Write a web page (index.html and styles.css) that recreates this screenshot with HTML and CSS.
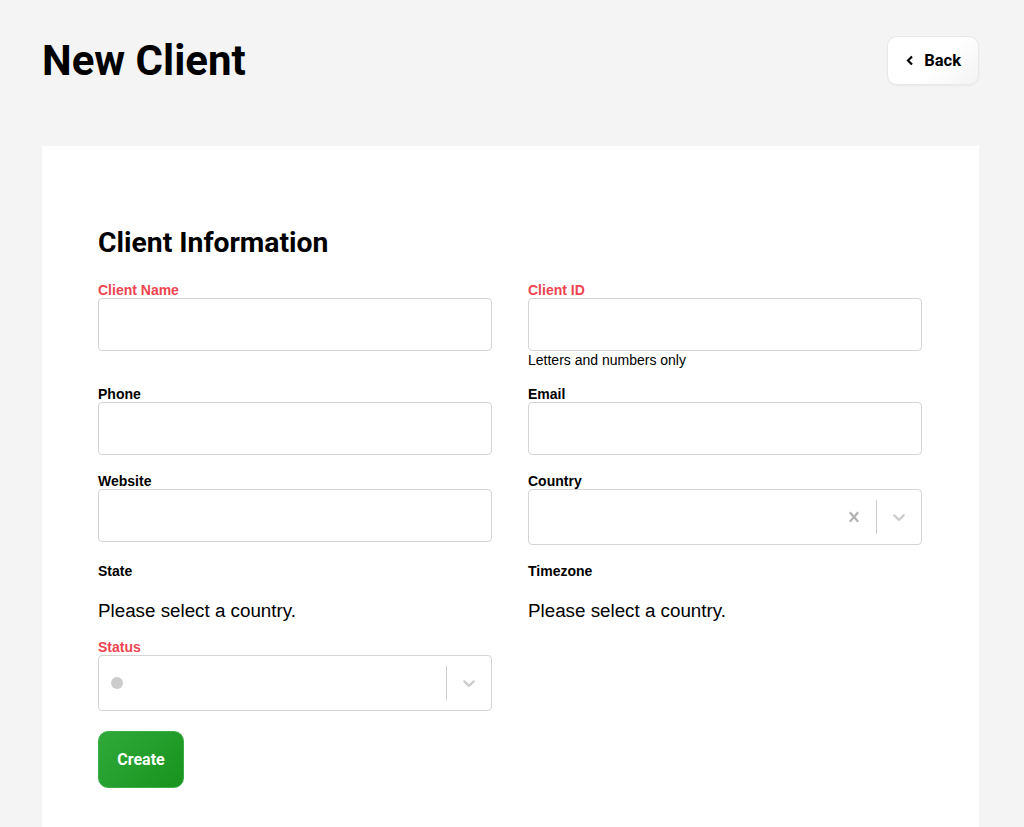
FILE: index.html
```html
<!DOCTYPE html>
<html lang="en">
<head>
  <meta charset="UTF-8">
  <title>New Client</title>
  <link rel="stylesheet" href="styles.css">
</head>
<body>
  <div id="page">
    <!-- Page header -->
    <div id="header">
      <h1>New Client</h1>
      <button class="back">
        <svg width="8" height="11" viewBox="0 0 8 11"><polyline points="6,1.5 2,5.5 6,9.5" fill="none" stroke="#000" stroke-width="2.2"/></svg>
        Back
      </button>
    </div>

    <!-- Form card -->
    <div id="card">
      <h2>Client Information</h2>
      <div class="grid">
        <div class="field">
          <label class="required">Client Name</label>
          <input type="text">
        </div>
        <div class="field">
          <label class="required">Client ID</label>
          <input type="text">
          <div class="help">Letters and numbers only</div>
        </div>
        <div class="field">
          <label>Phone</label>
          <input type="text">
        </div>
        <div class="field">
          <label>Email</label>
          <input type="text">
        </div>
        <div class="field">
          <label>Website</label>
          <input type="text">
        </div>
        <div class="field">
          <label>Country</label>
          <div class="select">
            <div class="value"></div>
            <div class="indicator">
              <svg width="20" height="20" viewBox="0 0 20 20"><path fill="#b3b3b3" d="M14.348 14.849c-0.469 0.469-1.229 0.469-1.697 0l-2.651-3.030-2.651 3.029c-0.469 0.469-1.229 0.469-1.697 0-0.469-0.469-0.469-1.229 0-1.697l2.758-3.15-2.759-3.152c-0.469-0.469-0.469-1.228 0-1.697s1.228-0.469 1.697 0l2.652 3.031 2.651-3.031c0.469-0.469 1.228-0.469 1.697 0s0.469 1.229 0 1.697l-2.758 3.152 2.758 3.15c0.469 0.469 0.469 1.229 0 1.698z"/></svg>
            </div>
            <span class="sep"></span>
            <div class="indicator">
              <svg width="20" height="20" viewBox="0 0 20 20"><path fill="#cccccc" d="M4.516 7.548c0.436-0.446 1.043-0.481 1.576 0l3.908 3.747 3.908-3.747c0.533-0.481 1.141-0.446 1.574 0 0.436 0.445 0.408 1.197 0 1.615-0.406 0.418-4.695 4.502-4.695 4.502-0.217 0.223-0.502 0.335-0.787 0.335s-0.57-0.112-0.789-0.335c0 0-4.287-4.084-4.695-4.502s-0.436-1.17 0-1.615z"/></svg>
            </div>
          </div>
        </div>
        <div class="field">
          <label>State</label>
          <p class="empty">Please select a country.</p>
        </div>
        <div class="field">
          <label>Timezone</label>
          <p class="empty">Please select a country.</p>
        </div>
        <div class="field">
          <label class="required">Status</label>
          <div class="select">
            <div class="value"><span class="dot"></span></div>
            <span class="sep"></span>
            <div class="indicator">
              <svg width="20" height="20" viewBox="0 0 20 20"><path fill="#cccccc" d="M4.516 7.548c0.436-0.446 1.043-0.481 1.576 0l3.908 3.747 3.908-3.747c0.533-0.481 1.141-0.446 1.574 0 0.436 0.445 0.408 1.197 0 1.615-0.406 0.418-4.695 4.502-4.695 4.502-0.217 0.223-0.502 0.335-0.787 0.335s-0.57-0.112-0.789-0.335c0 0-4.287-4.084-4.695-4.502s-0.436-1.170 0-1.615z"/></svg>
            </div>
          </div>
        </div>
      </div>
      <button class="create">Create</button>
    </div>
  </div>
</body>
</html>
```

FILE: styles.css
```css
body {
  margin: 0;
  font-family: Roboto, "Liberation Sans", sans-serif;
  background-color: #f4f4f4;
  color: #000;
}
#page {
  padding: 36px 45px 0 42px;
}
/* Header */
#header {
  display: flex;
  justify-content: space-between;
  align-items: center;
}
h1 {
  margin: 0;
  font-size: 42px;
  font-weight: 700;
}
button.back {
  display: flex;
  align-items: center;
  gap: 10px;
  height: 49px;
  padding: 0 17px 1px 18px;
  font-family: inherit;
  font-size: 16.5px;
  font-weight: 700;
  color: #000;
  background: linear-gradient(135deg, #ffffff 55%, #f3f3f3);
  border: 1px solid #e8e8e8;
  border-radius: 10px;
  box-shadow: 0 1px 2px rgba(0,0,0,0.05);
}
/* Card */
#card {
  margin-top: 61px;
  background: white;
  padding: 80px 57px 40px 56px;
  width: 937px;
  box-sizing: border-box;
}
h2 {
  margin: 0 0 23px;
  font-size: 28.3px;
  font-weight: 700;
}
.grid {
  display: grid;
  grid-template-columns: 1fr 1fr;
  column-gap: 36px;
  row-gap: 18px;
}
/* Field text uses the Arial-width face */
label {
  display: block;
  font-family: "Liberation Sans", Arial, sans-serif;
  font-size: 14px;
  font-weight: 700;
}
label.required {
  color: #ec4450;
}
input {
  display: block;
  width: 100%;
  height: 53px;
  box-sizing: border-box;
  border: 1px solid #d4d4d4;
  border-radius: 4px;
  font-family: inherit;
  font-size: 16px;
}
.help {
  margin-top: 1px;
  font-family: "Liberation Sans", Arial, sans-serif;
  font-size: 14px;
}
p.empty {
  margin: 22px 0 1px;
  font-family: "Liberation Sans", Arial, sans-serif;
  font-size: 18.8px;
  line-height: 19px;
}
/* Select boxes */
.select {
  display: flex;
  align-items: stretch;
  height: 56px;
  box-sizing: border-box;
  border: 1px solid #d4d4d4;
  border-radius: 4px;
}
.select .value {
  flex: 1;
  display: flex;
  align-items: center;
  padding-left: 12px;
}
.select .indicator {
  width: 44px;
  display: flex;
  align-items: center;
  justify-content: center;
}
.select .sep {
  width: 1px;
  margin: 10px 0;
  background: #cccccc;
}
.dot {
  width: 12px;
  height: 12px;
  border-radius: 50%;
  background: #cccccc;
}
button.create {
  margin-top: 20px;
  width: 86px;
  height: 57px;
  font-family: inherit;
  font-size: 16px;
  font-weight: 700;
  color: white;
  background: linear-gradient(135deg, #30a93a, #18931e);
  border: 1px solid #3cae46;
  border-radius: 10px;
}
```
